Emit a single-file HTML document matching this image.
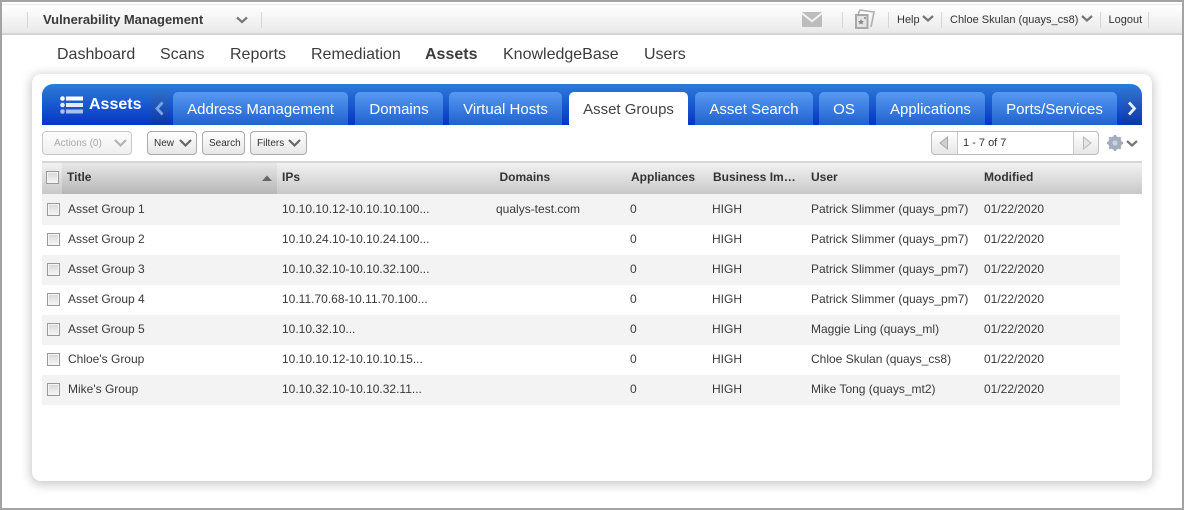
<!DOCTYPE html>
<html><head><meta charset="utf-8">
<style>
html,body{margin:0;padding:0;width:1184px;height:510px;overflow:hidden;background:#fff;font-family:"Liberation Sans",sans-serif;color:#333}
div,span{position:absolute;white-space:nowrap;box-sizing:border-box}
svg{position:absolute;overflow:visible}
.frame{left:0;top:0;width:1184px;height:510px;border:2px solid #a3a3a3;z-index:20}
.top{left:2px;top:4px;width:1180px;height:29px;background:linear-gradient(#fff,#e9e9e9);border-top:1px solid #e8e8e8}
.topline{left:2px;top:33px;width:1180px;height:2px;background:#d4d4d4}
.sep{width:1px;height:16px;top:12px;background:#d6d6d6}
.tb{font-size:11px;top:14px;line-height:13px;color:#333}
.nav{font-size:16px;top:45px;line-height:19px;color:#3c3c3c}
.card{left:32px;top:74px;width:1120px;height:407px;background:#fff;border-radius:9px;box-shadow:0 2px 10px 2px rgba(0,0,0,.2)}
.bar{left:42px;top:84px;width:1100px;height:41px;border-radius:11px 11px 0 0;background:linear-gradient(#2d7cd8,#0535c4)}
.tab{top:92px;height:33px;border-radius:5px 5px 0 0;background:linear-gradient(#5799f2,#2062cf);color:#fff;font-size:15px;line-height:35px;text-align:center}
.tab.on{background:#fff;color:#444}
.arrow{top:92px;height:33px;width:18px;border-radius:4px 4px 0 0;background:linear-gradient(#2f6cc8,#0a36a8)}
.btn{top:131px;height:24px;border:1px solid #aaa;border-radius:4px;background:linear-gradient(#fff,#e6e6e6);font-size:10px;line-height:24px;color:#333}
.btn span{top:0}
.hd{left:42px;top:161px;width:1100px;height:33px;border-top:2px solid #d8d8d8;background:linear-gradient(#f2f2f2,#c8c8c8)}
.hd2{left:62px;top:163px;width:215px;height:31px;background:linear-gradient(#e8e8e8,#b6b6b6)}
.h{top:170px;font-size:12px;font-weight:bold;line-height:14px;color:#333}
.row{left:42px;width:1078px;height:30px}
.g{background:#f3f3f3}
.c{font-size:12px;line-height:14px;color:#3a3a3a}
.cb{left:47px;width:13px;height:13px;border:1px solid #999;background:linear-gradient(#d8d8d8,#f6f6f6);box-shadow:inset 0 0 0 1px #f4f4f4}
</style></head><body>
<div class="top"></div><div class="topline"></div>
<div class="sep" style="left:27px"></div>
<div class="tb" style="left:43px;top:13px;font-size:13px;line-height:14px;font-weight:bold;color:#3a3a3a;letter-spacing:-.02px">Vulnerability Management</div>
<svg style="left:236px;top:16px" width="12" height="8"><path d="M1 1.500L6 6L11 1.500" fill="none" stroke="#777" stroke-width="2.200"/></svg>
<div class="sep" style="left:261px"></div>
<svg style="left:802px;top:12px" width="20" height="15"><path d="M0 0H20L10 8Z" fill="#bcbcbc"/><path d="M0 2.500L10 10.500L20 2.500V15H0Z" fill="#bcbcbc"/></svg>
<div class="sep" style="left:842px"></div>
<svg style="left:855px;top:9px" width="20" height="20"><path d="M3 5L5 1L19 3L16 18" fill="none" stroke="#b0b0b0" stroke-width="1.600"/><rect x="1" y="6" width="11.500" height="13" fill="#e4e4e4" stroke="#a8a8a8" stroke-width="2"/><path d="M6 10l1 2h2l-1.500 1.500 .5 2-2-1-2 1 .5-2L3 12h2z" fill="#888"/><rect x="9" y="8" width="2" height="2" fill="#999"/></svg>
<div class="sep" style="left:888px"></div>
<div class="tb" style="left:897px">Help</div>
<svg style="left:922px;top:15px" width="12" height="8"><path d="M1 1L6 5.500L11 1" fill="none" stroke="#777" stroke-width="2.200"/></svg>
<div class="sep" style="left:941px"></div>
<div class="tb" style="left:950px">Chloe Skulan (quays_cs8)</div>
<svg style="left:1081px;top:15px" width="12" height="8"><path d="M1 1L6 5.500L11 1" fill="none" stroke="#777" stroke-width="2.200"/></svg>
<div class="sep" style="left:1100px"></div>
<div class="tb" style="left:1108.500px">Logout</div>
<div class="sep" style="left:1148px"></div>

<div class="nav" style="left:57px">Dashboard</div>
<div class="nav" style="left:160px">Scans</div>
<div class="nav" style="left:230px">Reports</div>
<div class="nav" style="left:311px">Remediation</div>
<div class="nav" style="left:425px;font-weight:bold">Assets</div>
<div class="nav" style="left:503px">KnowledgeBase</div>
<div class="nav" style="left:644px">Users</div>

<div class="card"></div>
<div class="bar"></div>
<svg style="left:60px;top:96px" width="24" height="20"><circle cx="2.500" cy="2.500" r="2.300" fill="#fff"/><rect x="6" y="0.500" width="17" height="4" fill="#fff"/><circle cx="2.500" cy="9" r="2.300" fill="#e4ecfa"/><rect x="6" y="7" width="17" height="4" fill="#e4ecfa"/><circle cx="2.500" cy="15.500" r="2.300" fill="#a9bfee"/><rect x="6" y="13.500" width="17" height="4" fill="#a9bfee"/></svg>
<div style="left:89px;top:95px;font-size:16px;font-weight:bold;color:#fff;line-height:19px">Assets</div>
<div class="arrow" style="left:151px"></div>
<svg style="left:155px;top:101px" width="10" height="15"><path d="M7.500 1.500L2 7.500L7.500 13.500" fill="none" stroke="#7aa3e6" stroke-width="2.800"/></svg>
<div class="tab" style="left:173px;width:175px">Address Management</div>
<div class="tab" style="left:355px;width:88px">Domains</div>
<div class="tab" style="left:449px;width:113px">Virtual Hosts</div>
<div class="tab on" style="left:569px;width:119px">Asset Groups</div>
<div class="tab" style="left:695px;width:118px">Asset Search</div>
<div class="tab" style="left:819px;width:50px">OS</div>
<div class="tab" style="left:876px;width:109px">Applications</div>
<div class="tab" style="left:992px;width:125px">Ports/Services</div>
<div class="arrow" style="left:1122px;width:18px"></div>
<svg style="left:1127px;top:101px" width="10" height="15"><path d="M2 1.500L7.500 7.500L2 13.500" fill="none" stroke="#e6ecf8" stroke-width="2.800"/></svg>

<div class="btn" style="left:42px;width:90px;border-color:#c8c8c8;color:#aaa;background:linear-gradient(#fdfdfd,#efefef)"><span style="left:11px">Actions (0)</span></div>
<svg style="left:114px;top:139px" width="13" height="9"><path d="M1 1L6.500 6.500L12 1" fill="none" stroke="#b4b4b4" stroke-width="2.200"/></svg>
<div class="btn" style="left:147px;width:50px"><span style="left:6px">New</span></div>
<svg style="left:179px;top:139px" width="13" height="9"><path d="M1 1L6.500 6.500L12 1" fill="none" stroke="#666" stroke-width="2.200"/></svg>
<div class="btn" style="left:202px;width:43px"><span style="left:6px">Search</span></div>
<div class="btn" style="left:250px;width:57px"><span style="left:6px">Filters</span></div>
<svg style="left:288px;top:139px" width="13" height="9"><path d="M1 1L6.500 6.500L12 1" fill="none" stroke="#666" stroke-width="2.200"/></svg>

<div class="btn" style="left:931px;width:168px;border-color:#bdbdbd"></div>
<div style="left:957px;top:132px;width:117px;height:22px;background:#fff;border-left:1px solid #c8c8c8;border-right:1px solid #c8c8c8;font-size:11px;line-height:22px;padding-left:5px;color:#333">1 - 7 of 7</div>
<svg style="left:939px;top:136px" width="10" height="14"><path d="M8.500 1V13L1 7Z" fill="#d0d0d0" stroke="#a8a8a8"/></svg>
<svg style="left:1082px;top:136px" width="10" height="14"><path d="M1.500 1V13L9 7Z" fill="#e4e4e4" stroke="#b8b8b8"/></svg>
<svg style="left:1107px;top:135px" width="16" height="16"><circle cx="8" cy="8" r="5.200" fill="none" stroke="#9eacbd" stroke-width="3.200"/><path d="M8 0V16M0 8H16M2.300 2.300L13.700 13.700M13.700 2.300L2.300 13.700" stroke="#9eacbd" stroke-width="2.400"/><circle cx="8" cy="8" r="2.600" fill="#c9d2dc"/></svg>
<svg style="left:1126px;top:140px" width="12" height="8"><path d="M1 1L6 5.500L11 1" fill="none" stroke="#777" stroke-width="2.200"/></svg>

<div class="hd"></div><div class="hd2"></div>
<div class="cb" style="top:171px;left:46px"></div>
<div class="h" style="left:67px">Title</div>
<svg style="left:262px;top:175px" width="10" height="6"><path d="M0 6L5 0.500L10 6Z" fill="#666"/></svg>
<div class="h" style="left:282px">IPs</div>
<div class="h" style="left:499.500px">Domains</div>
<div class="h" style="left:631px">Appliances</div>
<div class="h" style="left:713px">Business Im…</div>
<div class="h" style="left:811px">User</div>
<div class="h" style="left:984px">Modified</div>

<div class="row g" style="top:194px;height:31px"></div>
<div class="row g" style="top:255px"></div>
<div class="row g" style="top:315px"></div>
<div class="row g" style="top:375px"></div>

<div class="cb" style="top:203px"></div><div class="c" style="left:68px;top:202px">Asset Group 1</div><div class="c" style="left:282px;top:202px">10.10.10.12-10.10.10.100...</div><div class="c" style="left:496px;top:202px">qualys-test.com</div><div class="c" style="left:630px;top:202px">0</div><div class="c" style="left:712px;top:202px">HIGH</div><div class="c" style="left:811px;top:202px">Patrick Slimmer (quays_pm7)</div><div class="c" style="left:984px;top:202px">01/22/2020</div>
<div class="cb" style="top:233px"></div><div class="c" style="left:68px;top:232px">Asset Group 2</div><div class="c" style="left:282px;top:232px">10.10.24.10-10.10.24.100...</div><div class="c" style="left:630px;top:232px">0</div><div class="c" style="left:712px;top:232px">HIGH</div><div class="c" style="left:811px;top:232px">Patrick Slimmer (quays_pm7)</div><div class="c" style="left:984px;top:232px">01/22/2020</div>
<div class="cb" style="top:263px"></div><div class="c" style="left:68px;top:262px">Asset Group 3</div><div class="c" style="left:282px;top:262px">10.10.32.10-10.10.32.100...</div><div class="c" style="left:630px;top:262px">0</div><div class="c" style="left:712px;top:262px">HIGH</div><div class="c" style="left:811px;top:262px">Patrick Slimmer (quays_pm7)</div><div class="c" style="left:984px;top:262px">01/22/2020</div>
<div class="cb" style="top:293px"></div><div class="c" style="left:68px;top:292px">Asset Group 4</div><div class="c" style="left:282px;top:292px">10.11.70.68-10.11.70.100...</div><div class="c" style="left:630px;top:292px">0</div><div class="c" style="left:712px;top:292px">HIGH</div><div class="c" style="left:811px;top:292px">Patrick Slimmer (quays_pm7)</div><div class="c" style="left:984px;top:292px">01/22/2020</div>
<div class="cb" style="top:323px"></div><div class="c" style="left:68px;top:322px">Asset Group 5</div><div class="c" style="left:282px;top:322px">10.10.32.10...</div><div class="c" style="left:630px;top:322px">0</div><div class="c" style="left:712px;top:322px">HIGH</div><div class="c" style="left:811px;top:322px">Maggie Ling (quays_ml)</div><div class="c" style="left:984px;top:322px">01/22/2020</div>
<div class="cb" style="top:353px"></div><div class="c" style="left:68px;top:352px">Chloe's Group</div><div class="c" style="left:282px;top:352px">10.10.10.12-10.10.10.15...</div><div class="c" style="left:630px;top:352px">0</div><div class="c" style="left:712px;top:352px">HIGH</div><div class="c" style="left:811px;top:352px">Chloe Skulan (quays_cs8)</div><div class="c" style="left:984px;top:352px">01/22/2020</div>
<div class="cb" style="top:383px"></div><div class="c" style="left:68px;top:382px">Mike's Group</div><div class="c" style="left:282px;top:382px">10.10.32.10-10.10.32.11...</div><div class="c" style="left:630px;top:382px">0</div><div class="c" style="left:712px;top:382px">HIGH</div><div class="c" style="left:811px;top:382px">Mike Tong (quays_mt2)</div><div class="c" style="left:984px;top:382px">01/22/2020</div>
<div class="frame"></div>
</body></html>
